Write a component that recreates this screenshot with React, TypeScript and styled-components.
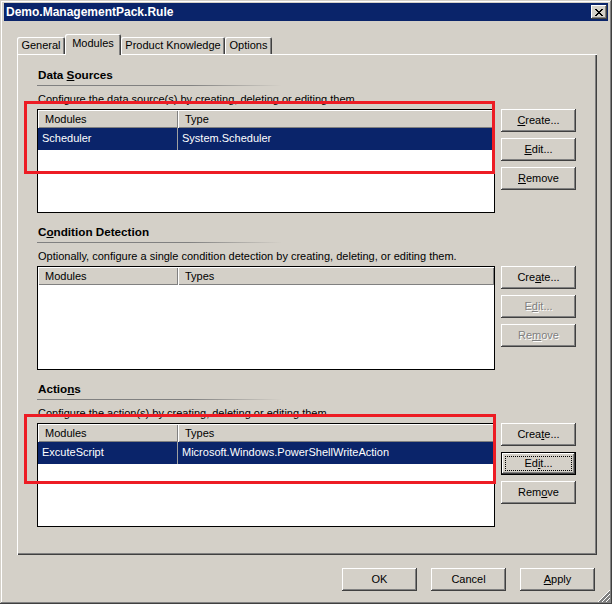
import type { ReactNode } from 'react'
import styled, { createGlobalStyle, css } from 'styled-components'

const FONT = "'Liberation Sans', Arial, sans-serif"

const GlobalStyle = createGlobalStyle`
  html, body {
    margin: 0;
    padding: 0;
    background: #d4d0c8;
  }
  body {
    font-family: ${FONT};
    font-size: 11px;
    color: #000;
  }
`

type ButtonDef = { label: ReactNode; disabled?: boolean; isDefault?: boolean }
type MarkBox = { left: number; top: number; width: number; height: number }

type SectionDef = {
  key: string
  title: ReactNode
  description: string
  columns: string[]
  rows: string[][]
  buttons: ButtonDef[]
  mark?: MarkBox
}

const tabs = [
  { name: 'General', width: 48 },
  { name: 'Modules', width: 56, active: true },
  { name: 'Product Knowledge', width: 104 },
  { name: 'Options', width: 47 },
]

const sections: SectionDef[] = [
  {
    key: 'ds',
    title: (
      <>
        Data <u>S</u>ources
      </>
    ),
    description: 'Configure the data source(s) by creating, deleting or editing them.',
    columns: ['Modules', 'Type'],
    rows: [['Scheduler', 'System.Scheduler']],
    buttons: [
      { label: <><u>C</u>reate...</> },
      { label: <><u>E</u>dit...</> },
      { label: <><u>R</u>emove</> },
    ],
    mark: { left: -13, top: -8, width: 471, height: 73 },
  },
  {
    key: 'cd',
    title: (
      <>
        C<u>o</u>ndition Detection
      </>
    ),
    description:
      'Optionally, configure a single condition detection by creating, deleting, or editing them.',
    columns: ['Modules', 'Types'],
    rows: [],
    buttons: [
      { label: <>Cre<u>a</u>te...</> },
      { label: <>E<u>d</u>it...</>, disabled: true },
      { label: <>Re<u>m</u>ove</>, disabled: true },
    ],
  },
  {
    key: 'act',
    title: (
      <>
        Actio<u>n</u>s
      </>
    ),
    description: 'Configure the action(s) by creating, deleting or editing them.',
    columns: ['Modules', 'Types'],
    rows: [['ExcuteScript', 'Microsoft.Windows.PowerShellWriteAction']],
    buttons: [
      { label: <>Crea<u>t</u>e...</> },
      { label: <>Ed<u>i</u>t...</>, isDefault: true },
      { label: <>Rem<u>o</u>ve</> },
    ],
    mark: { left: -13, top: -9, width: 472, height: 70 },
  },
]

// pixel X of the classic close button, one entry per row: [start, length] runs
const closeGlyph: [number, number][][] = [
  [[0, 2], [6, 2]],
  [[1, 2], [5, 2]],
  [[2, 4]],
  [[3, 2]],
  [[2, 4]],
  [[1, 2], [5, 2]],
  [[0, 2], [6, 2]],
]

const CloseGlyph = () => (
  <svg width='8' height='7' viewBox='0 0 8 7' shapeRendering='crispEdges'>
    {closeGlyph.map((runs, y) =>
      runs.map(([x, w]) => <rect key={`${y}-${x}`} x={x} y={y} width={w} height={1} fill='#000' />)
    )}
  </svg>
)

const SizeGrip = () => (
  <StyledGrip width='12' height='12' viewBox='0 0 12 12' shapeRendering='crispEdges'>
    {[0, 4, 8].map(k => (
      <g key={k}>
        <line x1={12} y1={k + 0.5} x2={k + 0.5} y2={12} stroke='#fff' strokeWidth='1' />
        <line x1={12} y1={k + 1.5} x2={k + 1.5} y2={12} stroke='#808080' strokeWidth='1' />
        <line x1={12} y1={k + 2.5} x2={k + 2.5} y2={12} stroke='#808080' strokeWidth='1' />
      </g>
    ))}
  </StyledGrip>
)

const Section = ({ section }: { section: SectionDef }) => (
  <StyledSection>
    <StyledHeading>{section.title}</StyledHeading>
    <StyledRule />
    <StyledDescription>{section.description}</StyledDescription>
    <StyledBody>
      <StyledListWrap>
        <StyledList>
          <StyledHeaderRow>
            {section.columns.map((col, i) => (
              <StyledHeaderCell key={col} $first={i === 0}>
                {col}
              </StyledHeaderCell>
            ))}
          </StyledHeaderRow>
          {section.rows.map(row => (
            <StyledRow key={row[0]}>
              {row.map((cell, i) => (
                <StyledCell key={cell} $first={i === 0}>
                  {cell}
                </StyledCell>
              ))}
            </StyledRow>
          ))}
        </StyledList>
        {section.mark && <StyledMark $box={section.mark} />}
      </StyledListWrap>
      <StyledButtonColumn>
        {section.buttons.map((btn, i) => (
          <StyledButton key={i} disabled={btn.disabled} $default={btn.isDefault}>
            {btn.label}
          </StyledButton>
        ))}
      </StyledButtonColumn>
    </StyledBody>
  </StyledSection>
)

const App = () => {
  return (
    <>
      <GlobalStyle />
      <StyledWindow>
        <StyledTitleBar>
          <StyledTitle>Demo.ManagementPack.Rule</StyledTitle>
          <StyledCloseButton>
            <CloseGlyph />
          </StyledCloseButton>
        </StyledTitleBar>

        <StyledTabStrip>
          {tabs.map(tab => (
            <StyledTab key={tab.name} $width={tab.width} $active={tab.active}>
              {tab.name}
            </StyledTab>
          ))}
        </StyledTabStrip>

        <StyledPanel>
          {sections.map(section => (
            <Section key={section.key} section={section} />
          ))}
        </StyledPanel>

        <StyledFooter>
          <StyledButton>OK</StyledButton>
          <StyledButton>Cancel</StyledButton>
          <StyledButton>
            <u>A</u>pply
          </StyledButton>
        </StyledFooter>

        <SizeGrip />
      </StyledWindow>
    </>
  )
}

export default App

const raised = css`
  box-shadow: inset -1px -1px #404040, inset 1px 1px #fff, inset -2px -2px #808080,
    inset 2px 2px #d4d0c8;
`

const StyledWindow = styled.div`
  position: relative;
  box-sizing: border-box;
  width: 612px;
  height: 604px;
  padding: 3px 4px 0;
  display: flex;
  flex-direction: column;
  background: #d4d0c8;
  box-shadow: inset -1px -1px #404040, inset 1px 1px #d4d0c8, inset -2px -2px #808080,
    inset 2px 2px #fff;
`

const StyledTitleBar = styled.div`
  height: 18px;
  display: flex;
  align-items: center;
  justify-content: space-between;
  padding: 0 1px 0 2px;
  background: #0a246a;
`

const StyledTitle = styled.span`
  color: #fff;
  font: bold 12px/18px ${FONT};
`

const StyledCloseButton = styled.div`
  box-sizing: border-box;
  width: 16px;
  height: 14px;
  display: flex;
  align-items: center;
  justify-content: center;
  padding-right: 1px;
  background: #d4d0c8;
  ${raised}
`

const StyledTabStrip = styled.div`
  position: relative;
  z-index: 1;
  height: 20px;
  margin: 13px 0 0 13px;
  display: flex;
  align-items: flex-end;
`

const StyledTab = styled.div<{ $width: number; $active?: boolean }>`
  box-sizing: border-box;
  width: ${p => p.$width}px;
  height: ${p => (p.$active ? 21 : 17)}px;
  margin-bottom: ${p => (p.$active ? -1 : 0)}px;
  line-height: ${p => (p.$active ? 19 : 17)}px;
  text-align: center;
  white-space: nowrap;
  background: #d4d0c8;
  border-radius: 2px 2px 0 0;
  box-shadow: inset 1px 1px #fff, inset -1px 0 #404040, inset -2px 0 #808080;
`

const StyledPanel = styled.div`
  box-sizing: border-box;
  width: 580px;
  height: 501px;
  margin-left: 13px;
  padding: 14px 21px 0 20px;
  display: flex;
  flex-direction: column;
  gap: 12px;
  box-shadow: inset 1px 1px #fff, inset -1px -1px #404040, inset -2px -2px #808080;
`

const StyledSection = styled.section`
  display: flex;
  flex-direction: column;
`

const StyledHeading = styled.div`
  height: 14px;
  padding-left: 1px;
  font: bold 11.7px/14px ${FONT};
`

const StyledRule = styled.div`
  width: 245px;
  height: 1px;
  margin-top: 3px;
  background: linear-gradient(to right, #808080 0%, #808080 62%, rgba(212, 208, 200, 0) 100%);
`

const StyledDescription = styled.div`
  margin-top: 6px;
  padding-left: 1px;
  line-height: 14px;
  white-space: nowrap;
`

const StyledBody = styled.div`
  margin-top: 3px;
  display: flex;
  gap: 6px;
`

const StyledListWrap = styled.div`
  position: relative;
`

const StyledList = styled.div`
  box-sizing: border-box;
  width: 458px;
  height: 104px;
  overflow: hidden;
  border: 1px solid #000;
  background: #fff;
`

const StyledHeaderRow = styled.div`
  display: flex;
  height: 18px;
`

const StyledHeaderCell = styled.div<{ $first?: boolean }>`
  box-sizing: border-box;
  ${p => (p.$first ? 'width: 140px;' : 'flex: 1;')}
  padding-left: 7px;
  line-height: 18px;
  background: #d4d0c8;
  box-shadow: inset 1px 1px #fff, inset -1px -1px #808080;
`

const StyledRow = styled.div`
  display: flex;
  height: 22px;
  background: #0a246a;
  color: #fff;
`

const StyledCell = styled.div<{ $first?: boolean }>`
  box-sizing: border-box;
  ${p => (p.$first ? 'width: 140px; border-right: 1px solid #a0a0a0;' : 'flex: 1;')}
  padding-left: 4px;
  line-height: 21px;
  white-space: nowrap;
`

const StyledMark = styled.div<{ $box: MarkBox }>`
  position: absolute;
  left: ${p => p.$box.left}px;
  top: ${p => p.$box.top}px;
  width: ${p => p.$box.width}px;
  height: ${p => p.$box.height}px;
  box-sizing: border-box;
  border: 3px solid #ed1c24;
  pointer-events: none;
`

const StyledButtonColumn = styled.div`
  display: flex;
  flex-direction: column;
  gap: 6px;
`

const StyledButton = styled.button<{ $default?: boolean }>`
  position: relative;
  box-sizing: border-box;
  width: 75px;
  height: 23px;
  padding: 0;
  border: none;
  border-radius: 0;
  background: #d4d0c8;
  color: #000;
  font: 11px/23px ${FONT};
  text-align: center;
  ${raised}

  ${p =>
    p.$default &&
    css`
      box-shadow: inset 0 0 0 1px #000, inset -2px -2px #404040, inset 2px 2px #fff,
        inset -3px -3px #808080;
      &::after {
        content: '';
        position: absolute;
        inset: 4px;
        border: 1px dotted #000;
      }
    `}

  &:disabled {
    color: #808080;
    text-shadow: 1px 1px #fff;
  }
`

const StyledFooter = styled.div`
  margin-top: 13px;
  padding-right: 13px;
  display: flex;
  justify-content: flex-end;
  gap: 14px;
`

const StyledGrip = styled.svg`
  position: absolute;
  right: 2px;
  bottom: 2px;
`
